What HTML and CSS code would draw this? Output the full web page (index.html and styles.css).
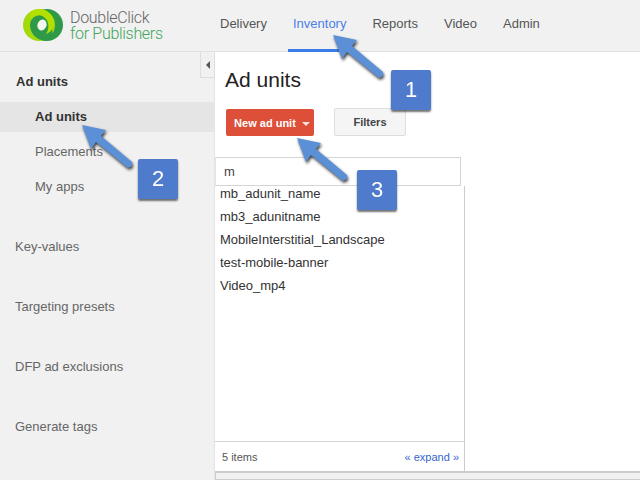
FILE: index.html
```html
<!DOCTYPE html>
<html lang="en">
<head>
    <meta charset="UTF-8">
    <title>Ad units</title>
    <link rel="stylesheet" href="styles.css">
</head>
<body>
    <header class="topbar">
        <div class="logo">
            <svg class="logo-mark" width="40" height="32" viewBox="0 0 40 32">
                <circle cx="24" cy="16" r="16" fill="#2e9a48"/>
                <circle cx="16" cy="16" r="16" fill="#a4d90c"/>
                <path fill="#2e9a48" d="M7 16C7 10 12 6 19 6L28 14 30 26 22 32C13 31 7 24 7 16z"/>
                <path fill="#b4e000" d="M16 0C24 0 30 6 31 13 31 19 28 23 23 25 25 22 26 18 25 14 24 10 21 7 16 6 13 6 10 7 8 9 4 5 10 0 16 0z"/>
                <ellipse cx="19" cy="16" rx="4.5" ry="5.5" transform="rotate(20 19 16)" fill="#f4f7ee"/>
            </svg>
            <div class="logo-text">
                <span class="logo-top">DoubleClick</span>
                <span class="logo-bottom">for Publishers</span>
            </div>
        </div>
        <nav class="tabs">
            <a class="tab">Delivery</a>
            <a class="tab active">Inventory</a>
            <a class="tab">Reports</a>
            <a class="tab">Video</a>
            <a class="tab">Admin</a>
        </nav>
    </header>

    <div class="content">
        <aside class="sidebar">
            <button class="collapse"><span class="collapse-arrow"></span></button>
            <h4 class="side-title">Ad units</h4>
            <a class="side-item selected">Ad units</a>
            <a class="side-item">Placements</a>
            <a class="side-item">My apps</a>
            <a class="side-group first">Key-values</a>
            <a class="side-group">Targeting presets</a>
            <a class="side-group">DFP ad exclusions</a>
            <a class="side-group">Generate tags</a>
        </aside>

        <main class="main">
            <h1 class="page-title">Ad units</h1>
            <div class="toolbar">
                <button class="btn-new">New ad unit <span class="caret"></span></button>
                <button class="btn-filters">Filters</button>
            </div>
            <div class="search">m</div>
            <div class="list-panel">
                <ul class="list">
                    <li>mb_adunit_name</li>
                    <li>mb3_adunitname</li>
                    <li>MobileInterstitial_Landscape</li>
                    <li>test-mobile-banner</li>
                    <li>Video_mp4</li>
                </ul>
                <div class="list-footer">
                    <span>5 items</span>
                    <a class="expand">« expand »</a>
                </div>
            </div>
            <div class="hscroll"></div>
        </main>
    </div>

    <!-- Annotations drawn over the page -->
    <svg class="arrows" width="640" height="480" viewBox="0 0 640 480">
        <defs>
            <path id="arrow" d="M0 0L24 5 19 11 50 37 50 41 46 43 14 17 9 24z"/>
        </defs>
        <g class="arrow-fill">
            <use href="#arrow" x="333" y="35"/>
            <use href="#arrow" x="82" y="125"/>
            <use href="#arrow" x="297" y="138"/>
        </g>
    </svg>
    <div class="callout callout-1">1</div>
    <div class="callout callout-2">2</div>
    <div class="callout callout-3">3</div>
</body>
</html>
```

FILE: styles.css
```css
html, body {
    margin: 0;
    padding: 0;
    height: 100%;
    overflow: hidden;
}
body {
    width: 640px;
    height: 480px;
    position: relative;
    font-family: "Liberation Sans", Arial, sans-serif;
    font-size: 13px;
    color: #444;
    background-color: #fff;
    display: flex;
    flex-direction: column;
}

/* Top bar */
.topbar {
    height: 51px;
    flex: none;
    display: flex;
    background-color: #f1f1f1;
    border-bottom: 1px solid #e0e0e0;
}
.logo {
    width: 215px;
    flex: none;
    display: flex;
    align-items: flex-start;
    padding: 9px 0 0 23px;
    box-sizing: border-box;
}
.logo-mark {
    flex: none;
    margin-right: 7px;
}
.logo-text {
    display: flex;
    flex-direction: column;
    font-family: Roboto, "Liberation Sans", sans-serif;
    font-weight: 300;
    font-size: 16px;
    letter-spacing: -0.3px;
    line-height: 16px;
    padding-top: 1px;
}
.logo-top {
    color: #666;
}
.logo-bottom {
    color: #3fa45a;
}
.tabs {
    display: flex;
    gap: 16px;
}
.tab {
    padding: 0 5px;
    line-height: 48px;
    height: 48px;
    font-size: 13px;
    color: #555;
}
.tab.active {
    color: #4d7fe8;
    border-bottom: 3px solid #3b7de8;
    height: 49px;
}

/* Left column */
.content {
    flex: 1;
    display: flex;
    min-height: 0;
}
.sidebar {
    width: 214px;
    flex: none;
    position: relative;
    display: flex;
    flex-direction: column;
    align-items: flex-start;
    background-color: #f1f1f1;
    border-right: 1px solid #e4e4e4;
}
.collapse {
    position: absolute;
    top: 0;
    right: -1px;
    width: 15px;
    height: 26px;
    padding: 0;
    background-color: #f1f1f1;
    border: 1px solid #ddd;
    border-top: none;
    display: flex;
    align-items: center;
    justify-content: center;
}
.collapse-arrow {
    width: 0;
    height: 0;
    border-top: 4px solid transparent;
    border-bottom: 4px solid transparent;
    border-right: 4px solid #555;
}
.side-title {
    margin: 0;
    padding: 22px 0 0 16px;
    height: 28px;
    line-height: 15px;
    font-size: 13px;
    font-weight: bold;
    color: #333;
}
.side-item {
    width: 100%;
    box-sizing: border-box;
    padding-left: 35px;
    height: 35px;
    line-height: 29px;
    color: #666;
}
.side-item.selected {
    height: 30px;
    margin-bottom: 5px;
    font-weight: bold;
    color: #333;
    background-color: #e5e5e5;
}
.side-group {
    padding-left: 15px;
    height: 60px;
    line-height: 20px;
    color: #666;
}
.side-group.first {
    margin-top: 30px;
}

/* Main column */
.main {
    flex: 1;
    min-width: 0;
    display: flex;
    flex-direction: column;
}
.page-title {
    margin: 0;
    padding: 16px 0 0 10px;
    height: 40px;
    line-height: 24px;
    font-size: 21px;
    font-weight: normal;
    color: #222;
}
.toolbar {
    display: flex;
    align-items: flex-start;
    padding-left: 11px;
    gap: 20px;
    height: 49px;
}
.btn-new {
    width: 88px;
    height: 27px;
    margin-top: 1px;
    padding: 0 0 0 4px;
    border: none;
    border-radius: 2px;
    background-color: #dd4f38;
    color: #fff;
    font-family: inherit;
    font-size: 11px;
    font-weight: bold;
}
.caret {
    display: inline-block;
    width: 0;
    height: 0;
    margin-left: 3px;
    vertical-align: middle;
    border-left: 4px solid transparent;
    border-right: 4px solid transparent;
    border-top: 4px solid #f8e0dc;
}
.btn-filters {
    width: 72px;
    height: 28px;
    padding: 0;
    border: 1px solid #ddd;
    border-radius: 2px;
    background-color: #f5f5f5;
    color: #444;
    font-family: inherit;
    font-size: 11px;
    font-weight: bold;
}
.search {
    width: 246px;
    height: 29px;
    flex: none;
    box-sizing: border-box;
    padding-left: 8px;
    line-height: 27px;
    color: #444;
    border: 1px solid #d5d5d5;
    border-left-color: #e5e5e5;
    background-color: #fff;
}
.list-panel {
    width: 250px;
    height: 285px;
    flex: none;
    box-sizing: border-box;
    display: flex;
    flex-direction: column;
    border-right: 1px solid #ccc;
}
.list {
    flex: 1;
    margin: 0;
    padding: 0 0 0 5px;
    list-style: none;
}
.list li {
    height: 23px;
    line-height: 16px;
    color: #333;
}
.list-footer {
    height: 29px;
    flex: none;
    display: flex;
    justify-content: space-between;
    align-items: center;
    padding: 0 5px 0 7px;
    border-top: 1px solid #d5d5d5;
    font-size: 11px;
    color: #555;
}
.expand {
    color: #3366cc;
}
.hscroll {
    flex: 1;
    box-sizing: border-box;
    border: 1px solid #ccc;
    border-top-width: 2px;
    border-right: none;
    background-color: #f1f1f1;
}

/* Numbered callouts and arrows */
.arrows {
    position: absolute;
    left: 0;
    top: 0;
    pointer-events: none;
}
.arrow-fill {
    fill: #5b8fd6;
    filter: drop-shadow(1px 2px 1.5px rgba(0, 0, 0, 0.75));
}
.callout {
    position: absolute;
    width: 40px;
    height: 40px;
    border-radius: 2px;
    background-color: #4e7bcb;
    box-shadow: 0 2px 2px rgba(0, 0, 0, 0.55);
    color: #fff;
    font-size: 22px;
    line-height: 40px;
    text-align: center;
}
.callout-1 {
    left: 391px;
    top: 70px;
}
.callout-2 {
    left: 138px;
    top: 159px;
}
.callout-3 {
    left: 357px;
    top: 170px;
}
```
